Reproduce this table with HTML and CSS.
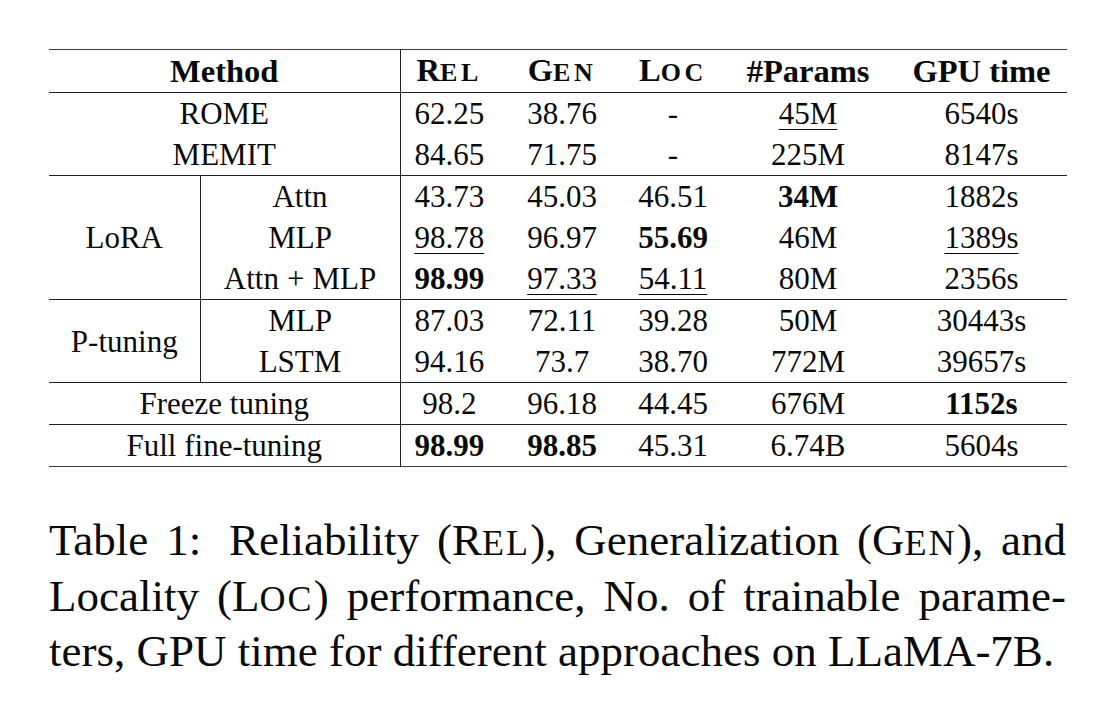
FILE: index.html
```html
<!DOCTYPE html>
<html lang="en">
<head>
<meta charset="utf-8">
<title>Table 1</title>
<link rel="stylesheet" href="styles.css">
</head>
<body>
<div class="page">
  <table class="results">
    <colgroup>
      <col class="c-group">
      <col class="c-sub">
      <col class="c-rel">
      <col class="c-gen">
      <col class="c-loc">
      <col class="c-params">
      <col class="c-gpu">
    </colgroup>
    <thead>
      <tr>
        <th colspan="2">Method</th>
        <th class="vsep">R<span class="sm">EL</span></th>
        <th>G<span class="sm">EN</span></th>
        <th>L<span class="sm">OC</span></th>
        <th>#Params</th>
        <th>GPU time</th>
      </tr>
    </thead>
    <tbody>
      <tr>
        <td colspan="2">ROME</td>
        <td class="vsep">62.25</td><td>38.76</td><td>-</td><td><span class="ul">45M</span></td><td>6540s</td>
      </tr>
      <tr>
        <td colspan="2">MEMIT</td>
        <td class="vsep">84.65</td><td>71.75</td><td>-</td><td>225M</td><td>8147s</td>
      </tr>
    </tbody>
    <tbody>
      <tr>
        <td rowspan="3" class="group">LoRA</td>
        <td>Attn</td>
        <td class="vsep">43.73</td><td>45.03</td><td>46.51</td><td><b>34M</b></td><td>1882s</td>
      </tr>
      <tr>
        <td>MLP</td>
        <td class="vsep"><span class="ul">98.78</span></td><td>96.97</td><td><b>55.69</b></td><td>46M</td><td><span class="ul">1389s</span></td>
      </tr>
      <tr>
        <td>Attn<span class="op">+</span>MLP</td>
        <td class="vsep"><b>98.99</b></td><td><span class="ul">97.33</span></td><td><span class="ul">54.11</span></td><td>80M</td><td>2356s</td>
      </tr>
    </tbody>
    <tbody>
      <tr>
        <td rowspan="2" class="group">P-tuning</td>
        <td>MLP</td>
        <td class="vsep">87.03</td><td>72.11</td><td>39.28</td><td>50M</td><td>30443s</td>
      </tr>
      <tr>
        <td>LSTM</td>
        <td class="vsep">94.16</td><td>73.7</td><td>38.70</td><td>772M</td><td>39657s</td>
      </tr>
    </tbody>
    <tbody>
      <tr>
        <td colspan="2">Freeze tuning</td>
        <td class="vsep">98.2</td><td>96.18</td><td>44.45</td><td>676M</td><td><b>1152s</b></td>
      </tr>
    </tbody>
    <tbody>
      <tr>
        <td colspan="2">Full fine-tuning</td>
        <td class="vsep"><b>98.99</b></td><td><b>98.85</b></td><td>45.31</td><td>6.74B</td><td>5604s</td>
      </tr>
    </tbody>
  </table>

  <p class="caption">
    <span class="line just">Table 1: <span class="capsep"></span>Reliability (R<span class="sm">EL</span>), Generalization (G<span class="sm">EN</span>), and</span>
    <span class="line just">Locality (L<span class="sm">OC</span>) performance, No. of trainable parame-</span>
    <span class="line">ters, GPU time for different approaches on LLaMA-7B.</span>
  </p>
</div>
</body>
</html>
```

FILE: styles.css
```css
html, body {
  margin: 0;
  padding: 0;
  background: #ffffff;
}

body {
  font-family: "Liberation Serif", "Times New Roman", serif;
  color: #0a0a0a;
}

.page {
  width: 1018px;
  padding: 49px 0 0 49px;
}

.results {
  border-collapse: collapse;
  table-layout: fixed;
  width: 1018px;
  font-size: 31px;
  border-top: 1px solid #3a3a3a;
  border-bottom: 1px solid #3a3a3a;
}

.c-group { width: 151px; }
.c-sub { width: 200px; }
.c-rel { width: 98px; }
.c-gen { width: 128px; }
.c-loc { width: 94px; }
.c-params { width: 176px; }
.c-gpu { width: 171px; }

.results th,
.results td {
  padding: 0;
  height: 41px;
  text-align: center;
  vertical-align: middle;
  white-space: nowrap;
  line-height: 35px;
}

.results th {
  font-weight: bold;
  font-size: 32.5px;
  height: 42px;
}

.results thead {
  border-bottom: 1px solid #222;
}

.results tbody + tbody {
  border-top: 1px solid #222;
}

.results .vsep {
  border-left: 1px solid #222;
}

.results .group {
  border-right: 1px solid #222;
}

.op {
  margin: 0 8px;
}

.sm {
  font-size: 0.8em;
  letter-spacing: 0.12em;
}

.results th .sm {
  letter-spacing: 0.14em;
}

.ul {
  text-decoration: underline;
  text-decoration-thickness: 1px;
  text-underline-offset: 5px;
}

.caption {
  margin: 47px 0 0 0;
  width: 1017px;
  font-size: 45px;
  line-height: 52.5px;
}

.caption .line {
  display: block;
  white-space: nowrap;
}

.caption .just {
  text-align: justify;
  text-align-last: justify;
  white-space: normal;
}

.caption .sm {
  letter-spacing: 0.06em;
}

.capsep {
  display: inline-block;
  width: 10px;
}
```
